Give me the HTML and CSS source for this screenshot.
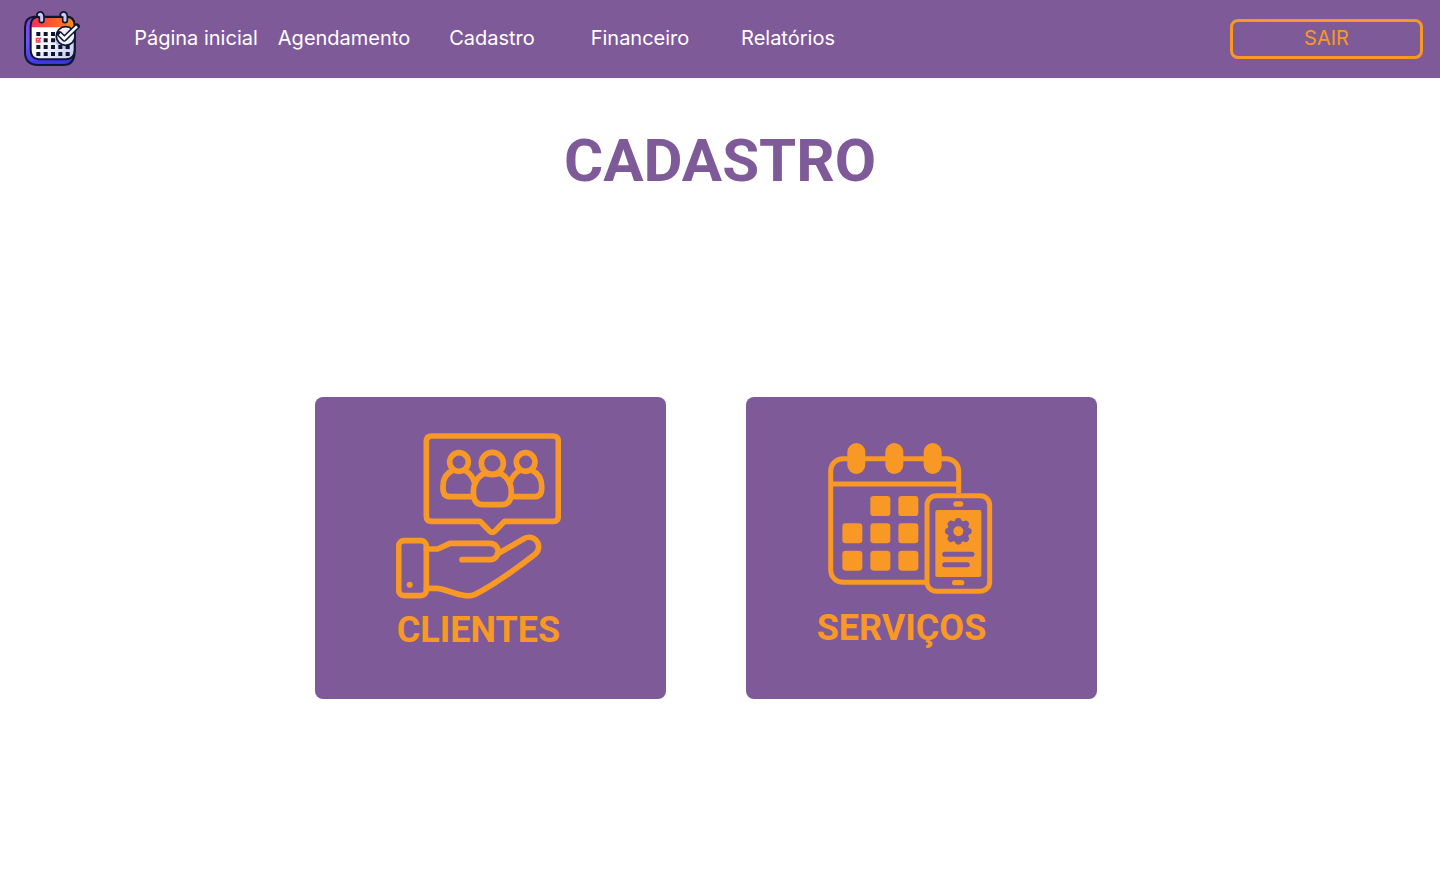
FILE: index.html
```html
<!DOCTYPE html>
<html lang="pt-BR">
<head>
<meta charset="utf-8">
<meta name="viewport" content="width=device-width, initial-scale=1">
<title>Cadastro</title>
<link rel="stylesheet" href="styles.css">
</head>
<body>
<header class="topbar">
  <a class="logo" href="#" aria-label="Início">
    <svg width="56" height="55" viewBox="42 33 168 165" fill="none" aria-hidden="true">
      <defs>
        <linearGradient id="side" x1="0" y1="0" x2="0.3" y2="1">
          <stop offset="0" stop-color="#8a3fd0"/><stop offset="0.5" stop-color="#6a55f0"/><stop offset="1" stop-color="#3b36e0"/>
        </linearGradient>
        <linearGradient id="head" x1="0" y1="0" x2="1" y2="0">
          <stop offset="0" stop-color="#fb2a5c"/><stop offset="0.5" stop-color="#fb5a2c"/><stop offset="1" stop-color="#ff8a1c"/>
        </linearGradient>
        <linearGradient id="sheet" x1="0" y1="0" x2="1" y2="1">
          <stop offset="0.4" stop-color="#ffffff"/><stop offset="1" stop-color="#c3c6f2"/>
        </linearGradient>
      </defs>
      <path d="M72 50H170Q192 50 194 75V158Q192 195 160 195H84Q46 194 45 158V80Q46 52 72 50Z" fill="url(#side)" stroke="#0d1730" stroke-width="6"/>
      <path d="M80 51H172Q193 52 194 76V150Q193 177 168 178H86Q62 176 62 150V78Q62 55 80 51Z" fill="url(#sheet)"/>
      <path d="M62 82Q62 51 84 51H170Q193 51 194 82Z" fill="url(#head)"/>
      <path d="M80 51H172Q193 52 194 76V150Q193 177 168 178H86Q62 176 62 150V78Q62 55 80 51Z" stroke="#0d1730" stroke-width="6"/>
      <path d="M140 96Q125 125 150 143L180 150V112Z" fill="#b9bdf0"/>
      <path d="M79 102H91M101 102H113M123 102H135M101 121H113M123 121H135M79 141H91M101 141H113M123 141H135M145 141H157M167 141H179M79 162H91M101 162H113M123 162H135M145 162H157M167 162H179" stroke="#0d1730" stroke-width="12"/>
      <path d="M89 115H79V126H90V121M82 119L85 123L93 113" stroke="#f04a5a" stroke-width="4"/>
      <g stroke-linecap="round">
        <path d="M88 44Q94 40 95 49V61M158 44Q164 40 165 49V61" stroke="#0d1730" stroke-width="19"/>
        <path d="M88 44Q94 40 95 49V61M158 44Q164 40 165 49V61" stroke="#c9cdf6" stroke-width="9"/>
      </g>
      <circle cx="167" cy="108" r="28" fill="#eef0fb" stroke="#0d1730" stroke-width="5"/>
      <path d="M149 102L163 116L201 79" stroke="#0d1730" stroke-width="17" stroke-linejoin="round" stroke-linecap="round"/>
      <path d="M149 102L163 116L201 79" stroke="#ffffff" stroke-width="8"/>
    </svg>
  </a>
  <nav class="menu" aria-label="Principal">
    <a class="menu-link" href="#">Página inicial</a>
    <a class="menu-link" href="#">Agendamento</a>
    <a class="menu-link" href="#">Cadastro</a>
    <a class="menu-link" href="#">Financeiro</a>
    <a class="menu-link" href="#">Relatórios</a>
  </nav>
  <button class="logout" type="button">SAIR</button>
</header>
<main class="content">
  <h1 class="title">CADASTRO</h1>
  <div class="cards">
    <a class="card card-clients" href="#">
      <svg width="165" height="166" viewBox="48 39 495 498" fill="none" stroke="#f89825" stroke-width="17" stroke-linejoin="round" stroke-linecap="round" aria-hidden="true">
        <path d="M155 48H519Q535 48 535 64V288Q535 304 519 304H374L346 332Q337 341 328 332L300 304H155Q139 304 139 288V64Q139 48 155 48Z"/>
        <circle cx="237" cy="126" r="28"/>
        <circle cx="437" cy="126" r="28"/>
        <circle cx="337" cy="130" r="33"/>
        <path stroke-linecap="butt" d="M217 152Q189 165 189 198V206Q189 230 212 230H275M256 152Q275 163 283 186M457 152Q485 165 485 198V206Q485 230 462 230H399M418 152Q399 163 391 186"/>
        <path d="M313 160Q280 178 280 216Q280 254 308 254H366Q394 254 394 216Q394 178 361 160Q337 168 313 160Z"/>
        <rect x="56" y="362" width="83" height="165" rx="16"/>
        <circle cx="89" cy="494" r="9" fill="#f89825" stroke="none"/>
        <path d="M139 387H173L210 370H330A24 24 0 0 1 330 419H246M352 402L429 358A27 27 0 0 1 465 403C400 453 330 501 285 523Q267 531 247 525C220 521 190 505 170 505H139"/>
      </svg>
      <span class="card-label">CLIENTES</span>
    </a>
    <a class="card card-services" href="#">
      <svg width="165" height="151" viewBox="53 39 495 453" fill="none" stroke="#f89825" stroke-width="15" aria-hidden="true">
        <path d="M344 457H98A37 37 0 0 1 61 420V123A37 37 0 0 1 98 86H408A37 37 0 0 1 445 123V190M61 162H445"/>
        <g fill="#f89825" stroke="none">
          <rect x="111" y="39" width="54" height="93" rx="27"/>
          <rect x="225" y="39" width="54" height="93" rx="27"/>
          <rect x="340" y="39" width="54" height="93" rx="27"/>
          <rect x="180" y="198" width="60" height="60" rx="10"/>
          <rect x="264" y="198" width="60" height="60" rx="10"/>
          <rect x="96" y="280" width="60" height="60" rx="10"/>
          <rect x="180" y="280" width="60" height="60" rx="10"/>
          <rect x="264" y="280" width="60" height="60" rx="10"/>
          <rect x="96" y="362" width="60" height="60" rx="10"/>
          <rect x="180" y="362" width="60" height="60" rx="10"/>
          <rect x="264" y="362" width="60" height="60" rx="10"/>
          <rect x="375" y="240" width="138" height="201" rx="6"/>
          <rect x="429" y="214" width="30" height="16" rx="8"/>
          <rect x="425" y="450" width="37" height="16" rx="8"/>
        </g>
        <rect x="350" y="197" width="188" height="287" rx="28"/>
        <g stroke="#7f5a99" stroke-linecap="round">
          <circle cx="444" cy="304" r="24" stroke-width="18"/>
          <path stroke-width="20" d="M444 274V275M444 333V334M414 304H415M473 304H474M422 282L423 283M465 325L466 326M422 326L423 325M465 283L466 282"/>
          <path d="M403 373H485M403 404H471"/>
        </g>
      </svg>
      <span class="card-label">SERVIÇOS</span>
    </a>
  </div>
</main>
</body>
</html>
```
FILE: styles.css
```css
* {
  box-sizing: border-box;
}

body {
  margin: 0;
  background: #ffffff;
  font-family: Inter, "Liberation Sans", sans-serif;
}

.topbar {
  display: flex;
  align-items: center;
  min-height: 78px;
  padding: 0 17px 0 24px;
  background: #7f5a99;
}

.logo {
  display: flex;
  margin-right: 42px;
  padding-bottom: 2px;
}

.menu {
  display: flex;
  margin-right: auto;
}

.menu-link {
  width: 148px;
  padding-bottom: 2px;
  color: #ffffff;
  font-size: 20px;
  font-weight: 400;
  line-height: 24px;
  text-align: center;
  text-decoration: none;
  white-space: nowrap;
}

.logout {
  width: 193px;
  height: 40px;
  padding: 0 0 2px;
  border: 3px solid #f89825;
  border-radius: 8px;
  background: transparent;
  color: #f89825;
  font: 400 20px/24px Inter, "Liberation Sans", sans-serif;
  cursor: pointer;
}

.title {
  margin: 0;
  padding-top: 48px;
  color: #7f5a99;
  font: 700 60px/70px Roboto, "Liberation Sans", sans-serif;
  text-align: center;
}

.cards {
  display: flex;
  flex-wrap: wrap;
  justify-content: center;
  gap: 80px;
  padding: 201px 28px 48px 0;
}

.card {
  display: flex;
  flex-direction: column;
  align-items: center;
  width: 351px;
  min-height: 302px;
  border-radius: 8px;
  background: #7f5a99;
  text-decoration: none;
}

.card-clients {
  padding: 36px 24px 0 0;
}

.card-services {
  padding: 46px 22px 0 0;
}

.card-label {
  margin-top: 10px;
  color: #f89825;
  font: 700 36px/42px Roboto, "Liberation Sans", sans-serif;
}

.card-services .card-label {
  margin-top: 13px;
  padding-right: 18px;
}
```
